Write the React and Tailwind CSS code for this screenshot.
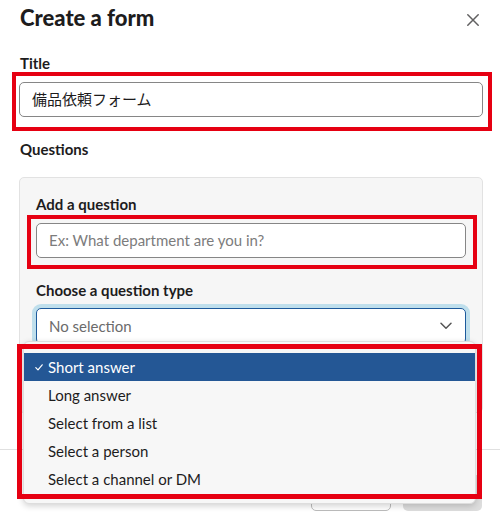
import React from "react";

const items = [
  "Short answer",
  "Long answer",
  "Select from a list",
  "Select a person",
  "Select a channel or DM",
];

export default function App() {
  return (
    <div className="relative w-[500px] h-[515px] overflow-hidden bg-white text-[#1d1c1d] font-['Lato','Noto_Sans_CJK_JP',sans-serif]">
      <div className="h-[449px] overflow-hidden flex flex-col">
        <div className="flex justify-between items-start pl-5 pr-5 pt-[4px]">
          <h1 className="text-[22px] leading-[28px] font-black">Create a form</h1>
          <svg width="12" height="12" viewBox="0 0 12 12" className="mt-[10px] mr-px" aria-hidden="true">
            <path d="M0.8 0.8 L11.2 11.2 M11.2 0.8 L0.8 11.2" stroke="#616061" strokeWidth="1.5" strokeLinecap="round" />
          </svg>
        </div>

        <div className="pl-[19px] pr-[17px] flex flex-col">
          <label className="mt-5 mb-2 pl-px text-[15px] leading-[22px] font-bold">Title</label>
          <div className="h-[35px] rounded-[5px] border border-[#868686] px-3 flex items-center text-[15px]">
            備品依頼フォーム
          </div>

          <div className="mt-[21px] mb-[17px] pl-px text-[15px] leading-[22px] font-bold">Questions</div>

          <div className="h-[236px] rounded-[5px] border border-[#e2e2e2] bg-[#f6f6f6] pt-[15px] pl-4 pr-4 flex flex-col">
            <label className="mb-2 text-[15px] leading-[22px] font-bold">Add a question</label>
            <div className="h-[35px] rounded-[5px] border border-[#868686] bg-white px-3 flex items-center text-[15px] text-[#7c7c7c]">
              Ex: What department are you in?
            </div>

            <label className="mt-[21px] mb-[7px] text-[15px] leading-[22px] font-bold">Choose a question type</label>
            <div className="h-[36px] rounded-[5px] border border-[#1d5a9c] bg-white pl-3 pr-[13px] flex items-center justify-between text-[15px] text-[#6b6b6b] shadow-[0_0_0_4px_rgba(29,155,209,0.25)]">
              <span>No selection</span>
              <svg width="12" height="8" viewBox="0 0 12 8" aria-hidden="true">
                <path d="M1 1.2 L6 6.2 L11 1.2" fill="none" stroke="#555" strokeWidth="1.5" strokeLinecap="round" strokeLinejoin="round" />
              </svg>
            </div>
          </div>
        </div>
      </div>

      <div className="border-t border-[#e0e0e0] pt-[25px] pr-[18px] flex justify-end gap-3">
        <button className="w-[80px] h-9 rounded-[5px] border border-[#bcbcbc] bg-white text-[15px] font-bold">Cancel</button>
        <button className="w-[79px] h-9 rounded-[5px] bg-[#dddddd] text-[15px] font-bold text-[#999]">Next</button>
      </div>

      {/* Dropdown menu overlay */}
      <div className="absolute left-[23px] top-[341px] w-[453px] h-[163px] rounded-[6px] border border-[#dddddd] bg-[#f7f7f7] shadow-[0_2px_6px_rgba(0,0,0,0.18)] py-[11px]">
        {items.map((t, i) => (
          <div
            key={t}
            className={
              i === 0
                ? "relative h-[28px] flex items-center pl-[24px] text-[15px] bg-[#245795] text-white"
                : "relative h-[28px] flex items-center pl-[24px] text-[15px] text-[#1d1c1d]"
            }
          >
            {i === 0 && (
              <svg width="8" height="7" viewBox="0 0 8 7" className="absolute left-[11px] top-[11px]" aria-hidden="true">
                <path d="M0.8 3.6 L3 5.9 L7.2 0.8" fill="none" stroke="white" strokeWidth="1.2" strokeLinecap="round" strokeLinejoin="round" />
              </svg>
            )}
            {t}
          </div>
        ))}
      </div>

      {/* Red annotation boxes */}
      <div className="absolute left-[12px] top-[72px] w-[480px] h-[59px] border-4 border-[#e60012] pointer-events-none" />
      <div className="absolute left-[27px] top-[215px] w-[450px] h-[54px] border-4 border-[#e60012] pointer-events-none" />
      <div className="absolute left-[17px] top-[344px] w-[465px] h-[155px] border-[5px] border-[#e60012] pointer-events-none" />
    </div>
  );
}
